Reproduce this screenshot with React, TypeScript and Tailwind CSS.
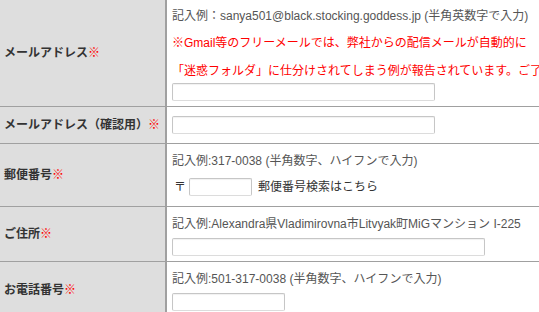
const jp = "font-['Liberation_Sans','Noto_Sans_CJK_JP',sans-serif]";

function Req() {
  return <span className="text-[#ff0000]">※</span>;
}

function Input({ w }: { w: string }) {
  return (
    <div
      className={`h-[18px] ${w} rounded-[2px] border border-[#c6c6c6] border-b-[#dcdcdc] bg-white shadow-[inset_0_1px_1px_rgba(0,0,0,0.06)]`}
    />
  );
}

function Row({
  label,
  children,
  className,
}: {
  label: React.ReactNode;
  children: React.ReactNode;
  className: string;
}) {
  return (
    <div className="flex border-b border-[#a0a0a0]">
      <div className="flex w-[167px] shrink-0 items-center border-r-2 border-[#a0a0a0] bg-[#dedede] pl-[4px] text-[12px] font-bold text-[#333]">
        <span>{label}</span>
      </div>
      <div className={`min-w-0 flex-1 pl-[5px] ${className}`}>{children}</div>
    </div>
  );
}

export default function App() {
  return (
    <div className={`h-[312px] w-[539px] overflow-hidden bg-white ${jp}`}>
      <Row
        label={
          <>
            メールアドレス
            <Req />
          </>
        }
        className="pt-[6px] pb-[5px]"
      >
        <div className="h-[20px] whitespace-nowrap text-[12px] leading-[20px] text-[#555]">
          記入例：sanya501@black.stocking.goddess.jp (半角英数字で入力)
        </div>
        <div className="mt-[7px] h-[20px] whitespace-nowrap text-[12px] leading-[20px] text-[#ff0000]">
          ※Gmail等のフリーメールでは、弊社からの配信メールが自動的に
        </div>
        <div className="mt-[8px] h-[20px] overflow-hidden whitespace-nowrap text-[12px] leading-[20px] text-[#ff0000]">
          「迷惑フォルダ」に仕分けされてしまう例が報告されています。ご了解ください。
        </div>
        <div className="mt-[2px]">
          <Input w="w-[263px]" />
        </div>
      </Row>

      <Row
        label={
          <>
            メールアドレス（確認用）
            <Req />
          </>
        }
        className="py-[9px]"
      >
        <Input w="w-[263px]" />
      </Row>

      <Row
        label={
          <>
            郵便番号
            <Req />
          </>
        }
        className="pt-[7px] pb-[9px]"
      >
        <div className="h-[20px] whitespace-nowrap text-[12px] leading-[20px] text-[#555]">
          記入例:317-0038 (半角数字、ハイフンで入力)
        </div>
        <div className="mt-[6px] flex h-[20px] items-center whitespace-nowrap text-[12px] text-[#333]">
          <span className="ml-[2px] mr-[3px]">〒</span>
          <Input w="w-[63px]" />
          <span className="ml-[6px]">郵便番号検索はこちら</span>
        </div>
      </Row>

      <Row
        label={
          <>
            ご住所
            <Req />
          </>
        }
        className="pt-[7px] pb-[5px]"
      >
        <div className="h-[20px] whitespace-nowrap text-[12px] leading-[20px] text-[#555]">
          記入例:Alexandra県Vladimirovna市Litvyak町MiGマンション I-225
        </div>
        <div className="mt-[4px]">
          <Input w="w-[313px]" />
        </div>
      </Row>

      <Row
        label={
          <>
            お電話番号
            <Req />
          </>
        }
        className="pt-[7px] pb-[6px]"
      >
        <div className="h-[20px] whitespace-nowrap text-[12px] leading-[20px] text-[#555]">
          記入例:501-317-0038 (半角数字、ハイフンで入力)
        </div>
        <div className="mt-[4px]">
          <Input w="w-[113px]" />
        </div>
      </Row>
    </div>
  );
}
